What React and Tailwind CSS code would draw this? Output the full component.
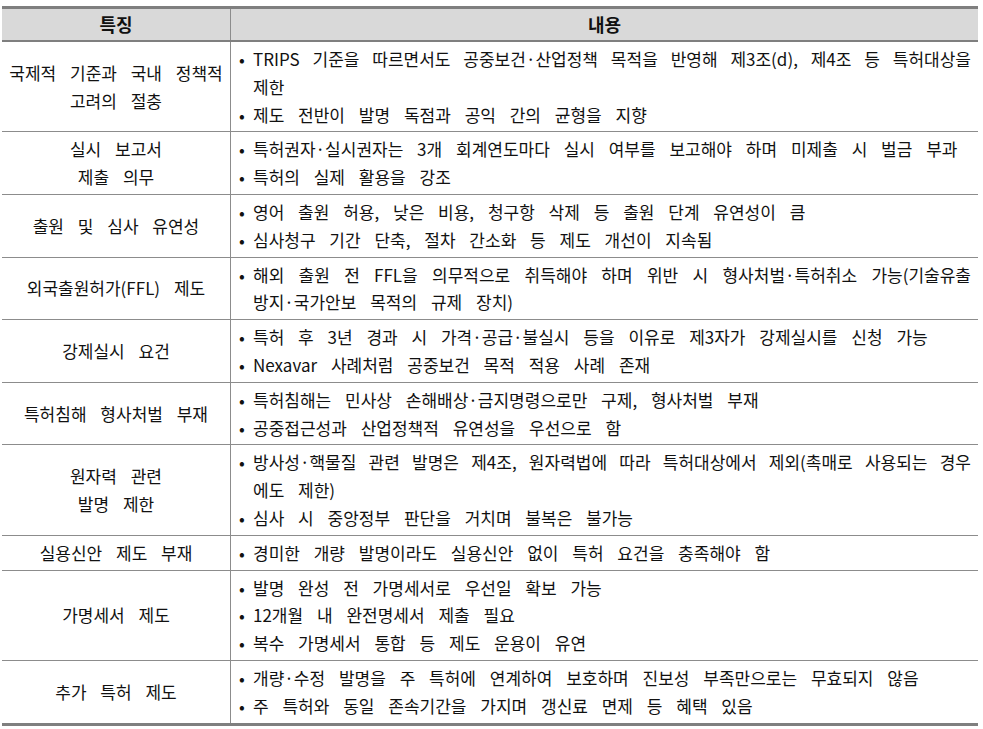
import React from "react";

const rows = [
  {
    left: ["국제적 기준과 국내 정책적", "고려의 절충"],
    items: [
      ["TRIPS 기준을 따르면서도 공중보건·산업정책 목적을 반영해 제3조(d), 제4조 등 특허대상을", "제한"],
      ["제도 전반이 발명 독점과 공익 간의 균형을 지향"],
    ],
  },
  {
    left: ["실시 보고서", "제출 의무"],
    items: [
      ["특허권자·실시권자는 3개 회계연도마다 실시 여부를 보고해야 하며 미제출 시 벌금 부과"],
      ["특허의 실제 활용을 강조"],
    ],
  },
  {
    left: ["출원 및 심사 유연성"],
    items: [
      ["영어 출원 허용, 낮은 비용, 청구항 삭제 등 출원 단계 유연성이 큼"],
      ["심사청구 기간 단축, 절차 간소화 등 제도 개선이 지속됨"],
    ],
  },
  {
    left: ["외국출원허가(FFL) 제도"],
    items: [
      ["해외 출원 전 FFL을 의무적으로 취득해야 하며 위반 시 형사처벌·특허취소 가능(기술유출", "방지·국가안보 목적의 규제 장치)"],
    ],
  },
  {
    left: ["강제실시 요건"],
    items: [
      ["특허 후 3년 경과 시 가격·공급·불실시 등을 이유로 제3자가 강제실시를 신청 가능"],
      ["Nexavar 사례처럼 공중보건 목적 적용 사례 존재"],
    ],
  },
  {
    left: ["특허침해 형사처벌 부재"],
    items: [
      ["특허침해는 민사상 손해배상·금지명령으로만 구제, 형사처벌 부재"],
      ["공중접근성과 산업정책적 유연성을 우선으로 함"],
    ],
  },
  {
    left: ["원자력 관련", "발명 제한"],
    items: [
      ["방사성·핵물질 관련 발명은 제4조, 원자력법에 따라 특허대상에서 제외(촉매로 사용되는 경우", "에도 제한)"],
      ["심사 시 중앙정부 판단을 거치며 불복은 불가능"],
    ],
  },
  {
    left: ["실용신안 제도 부재"],
    items: [["경미한 개량 발명이라도 실용신안 없이 특허 요건을 충족해야 함"]],
  },
  {
    left: ["가명세서 제도"],
    items: [
      ["발명 완성 전 가명세서로 우선일 확보 가능"],
      ["12개월 내 완전명세서 제출 필요"],
      ["복수 가명세서 통합 등 제도 운용이 유연"],
    ],
  },
  {
    left: ["추가 특허 제도"],
    items: [
      ["개량·수정 발명을 주 특허에 연계하여 보호하며 진보성 부족만으로는 무효되지 않음"],
      ["주 특허와 동일 존속기간을 가지며 갱신료 면제 등 혜택 있음"],
    ],
  },
];

export default function App() {
  return (
    <div
      className="w-[983px] h-[729px] bg-white pt-[6px] pl-[2px] text-[#111] text-[17px] [word-spacing:10px]"
      style={{ fontFamily: '"Noto Sans CJK KR", "Noto Sans", sans-serif' }}
    >
      <div className="w-[976px] border-t-[3px] border-b-[3px] border-[#7f7f7f]">
        <div className="grid grid-cols-[229px_1fr] bg-[#d9d9d9] h-[33px] border-b-[2px] border-[#7f7f7f] font-bold text-[18px]">
          <div className="border-r border-[#8c8c8c] flex items-center justify-center">특징</div>
          <div className="flex items-center justify-center">내용</div>
        </div>
        {rows.map((r, i) => (
          <div
            key={i}
            className={
              "grid grid-cols-[229px_1fr] " +
              (i < rows.length - 1 ? "border-b border-[#8c8c8c]" : "")
            }
          >
            <div className="border-r border-[#8c8c8c] flex flex-col items-center justify-center leading-[27.8px] py-[3px]">
              {r.left.map((l, j) => (
                <div key={j} className="whitespace-nowrap">{l}</div>
              ))}
            </div>
            <div className="pl-[8px] pr-[7px] py-[3px] leading-[27.8px]">
              {r.items.map((it, j) => (
                <div key={j} className="flex">
                  <span className="w-[14px] shrink-0">•</span>
                  <div className="flex-1 min-w-0">
                    {it.map((line, k) => (
                      <div
                        key={k}
                        className={
                          k < it.length - 1
                            ? "text-justify [text-align-last:justify] [word-spacing:0px]"
                            : "whitespace-nowrap"
                        }
                      >
                        {line}
                      </div>
                    ))}
                  </div>
                </div>
              ))}
            </div>
          </div>
        ))}
      </div>
    </div>
  );
}
